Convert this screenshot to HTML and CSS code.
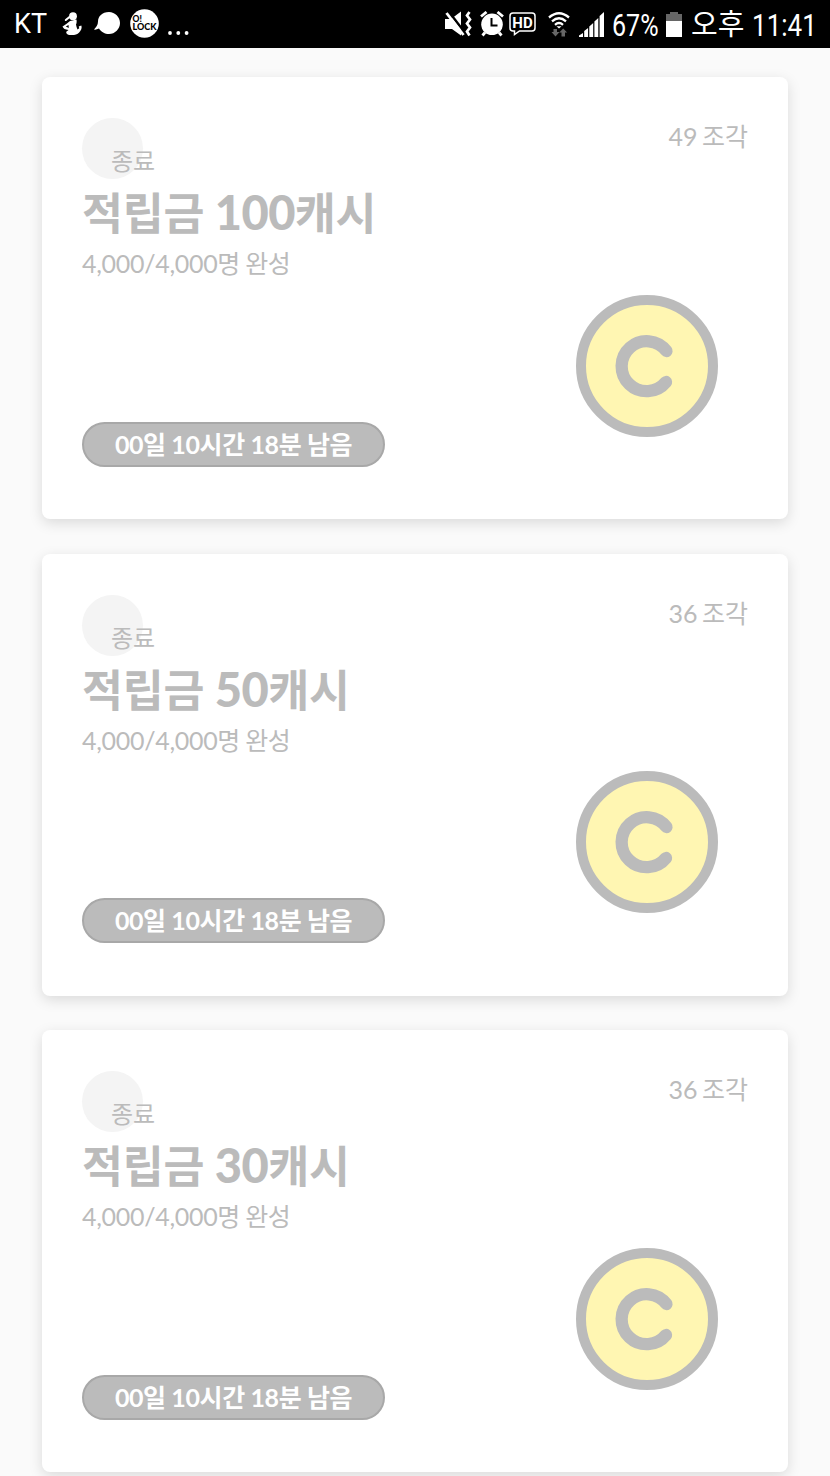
FILE: index.html
```
<!DOCTYPE html>
<html lang="ko">
<head>
<meta charset="UTF-8" />
<meta name="viewport" content="width=device-width,initial-scale=1" />
<title>적립금 조각</title>
<link rel="stylesheet" href="styles.css">
</head>
<body>

<!-- STATUS BAR -->
<header class="status">
  <div class="status-left">
    <span class="carrier">KT</span>
    <svg class="ic-person" width="20" height="24" viewBox="0 0 20 24">
      <circle cx="11" cy="4.200" r="3.900" fill="#fff"/>
      <path d="M7.500 5L3.800 8" stroke="#fff" stroke-width="2" stroke-linecap="round"/>
      <path d="M8 9l6.500-1.500q.5 3-.5 5 .5 3 1.500 5l1.800-1.300-.6-1.700 2.600-1q1 3-1 5.500-2 3.500-6.300 4H7q-3.300-.5-2.700-3.200L6.500 18Q1.500 17.500.500 14.500 4 12.500 8 9z" fill="#fff"/>
      <path d="M3.800 14.600l2.700-1.600.3 3z" fill="#000"/>
    </svg>
    <svg class="ic-talk" width="26" height="22" viewBox="0 0 26 22">
      <path d="M15 0C8 0 4 4.500 4 9.500 4 13 2 15 0 17.500q2 .5 5-1C7 20 11 22 15 22c6 0 11-5 11-11S21 0 15 0z" fill="#fff"/>
    </svg>
    <svg class="ic-lock" width="29" height="29" viewBox="0 0 29 29">
      <circle cx="14.500" cy="14.500" r="14.300" fill="#fff"/>
      <text class="lock-text" x="2.500" y="13">O!</text>
      <text class="lock-text" x="2.500" y="21.300" textLength="24" lengthAdjust="spacingAndGlyphs">LOCK</text>
    </svg>
    <svg class="ic-dots" width="21" height="4" viewBox="0 0 21 4">
      <g fill="#fff"><circle cx="2" cy="2" r="1.900"/><circle cx="10.300" cy="2" r="1.900"/><circle cx="18.600" cy="2" r="1.900"/></g>
    </svg>
  </div>
  <div class="status-right">
    <svg class="ic-mute" width="27" height="26" viewBox="0 0 27 26">
      <path d="M0 8h6L16 .500v24L7 18H0z" fill="#fff"/>
      <path d="M4 1L20.500 22.500" stroke="#000" stroke-width="2.600"/>
      <path d="M1.500 2L18.500 24" stroke="#fff" stroke-width="2.800"/>
      <path d="M24.500 1l-2.500 3.500 3 4-3 4 3 4-3 4 2.500 4" fill="none" stroke="#fff" stroke-width="2.700"/>
    </svg>
    <svg class="ic-alarm" width="24" height="26" viewBox="0 0 24 26">
      <path d="M1 5.500l5.500-4.500M23 5.500l-5.500-4.500M5 21.500l-2.500 3M19 21.500l2.500 3" stroke="#fff" stroke-width="2.800"/>
      <circle cx="12" cy="13.300" r="10.800" fill="#fff"/>
      <path d="M11.500 7v7.500h6" fill="none" stroke="#000" stroke-width="2"/>
    </svg>
    <svg class="ic-hd" width="27" height="24" viewBox="0 0 27 24">
      <path d="M4 1h19q3 0 3 3v12q0 3-3 3H10.500L5.500 22.500V19H4q-3 0-3-3V4q0-3 3-3z" fill="none" stroke="#fff" stroke-width="1.500"/>
      <text class="hd-text" x="3.300" y="15.500" textLength="20.500">HD</text>
    </svg>
    <svg class="ic-wifi" width="22" height="25" viewBox="0 0 22 25">
      <g fill="none" stroke="#fff" stroke-width="2.300">
        <path d="M1 5.500Q11-3 21 5.500"/><path d="M4 9.300q7-6 14 0"/><path d="M7 12.800q4-3.500 8 0"/>
      </g>
      <path d="M8.500 14.300h5L11 16.500z" fill="#fff"/>
      <path d="M5.500 17v3H3.500l4 4.500 4-4.500H9v-3zM13.500 24.500v-4H11.300l3.900-4 3.900 4H17v4z" fill="#666"/>
    </svg>
    <svg class="ic-signal" width="25" height="25" viewBox="0 0 25 25">
      <path d="M0 25v-1.500L4 21v4zM5.200 25v-6l3.900-3v9zM10.300 25V14.500L14.200 11v14zM15.400 25V9.500L19.300 6v19zM20.600 25V4L25 0v25z" fill="#fff"/>
    </svg>
    <span class="battery-text">67%</span>
    <svg class="ic-battery" width="16" height="25" viewBox="0 0 16 25">
      <path d="M0 2h4V0h8v2h4v7H0z" fill="#666"/>
      <path d="M0 9h16v16H0z" fill="#fff"/>
    </svg>
    <span class="ampm">오후</span>
    <span class="clock">11:41</span>
  </div>
</header>

<!-- REWARD LIST -->
<main class="list">

  <section class="card">
    <div class="card-head">
      <div class="badge"><span>종료</span></div>
      <div class="pieces">49 조각</div>
    </div>
    <h2>적립금 <b>100</b>캐시</h2>
    <p class="count">4,000/4,000명 완성</p>
    <div class="card-foot">
      <div class="remain"><span>00일 10시간 18분 남음</span></div>
      <svg class="coin" viewBox="0 0 142 142">
        <circle cx="71" cy="71" r="66" fill="#fff6b2" stroke="#bbb" stroke-width="10"/>
        <path d="M90.500 56A25 25 0 1 0 90 87" fill="none" stroke="#bbb" stroke-width="12.300" stroke-linecap="round"/>
      </svg>
    </div>
  </section>

  <section class="card">
    <div class="card-head">
      <div class="badge"><span>종료</span></div>
      <div class="pieces">36 조각</div>
    </div>
    <h2>적립금 <b>50</b>캐시</h2>
    <p class="count">4,000/4,000명 완성</p>
    <div class="card-foot">
      <div class="remain"><span>00일 10시간 18분 남음</span></div>
      <svg class="coin" viewBox="0 0 142 142">
        <circle cx="71" cy="71" r="66" fill="#fff6b2" stroke="#bbb" stroke-width="10"/>
        <path d="M90.500 56A25 25 0 1 0 90 87" fill="none" stroke="#bbb" stroke-width="12.300" stroke-linecap="round"/>
      </svg>
    </div>
  </section>

  <section class="card">
    <div class="card-head">
      <div class="badge"><span>종료</span></div>
      <div class="pieces">36 조각</div>
    </div>
    <h2>적립금 <b>30</b>캐시</h2>
    <p class="count">4,000/4,000명 완성</p>
    <div class="card-foot">
      <div class="remain"><span>00일 10시간 18분 남음</span></div>
      <svg class="coin" viewBox="0 0 142 142">
        <circle cx="71" cy="71" r="66" fill="#fff6b2" stroke="#bbb" stroke-width="10"/>
        <path d="M90.500 56A25 25 0 1 0 90 87" fill="none" stroke="#bbb" stroke-width="12.300" stroke-linecap="round"/>
      </svg>
    </div>
  </section>

</main>

</body>
</html>
```
FILE: styles.css
```
:root{
  --gray:#bbb; --bg:#fafafa;
}
*{box-sizing:border-box;
    margin:0;
    padding:0}

body{
  background:var(--bg);
  color:var(--gray);
  font-family:Lato,"Noto Sans CJK KR",sans-serif;
  height:1476px;
  overflow:hidden;
}

/* status bar */
.status{
  height:48px;
  background:#000;
  color:#fff;
  display:flex;
  justify-content:space-between;
  padding:0 14px 0 14px;
  font-family:Roboto,"Noto Sans CJK KR",sans-serif;
  line-height:48px;
  white-space:nowrap;
}
.status-left,.status-right{display:flex;align-items:center}
.status svg{flex:none}
.carrier{font-size:27px;width:48px}
.ic-person{margin-top:-1px}
.ic-talk{margin-left:12px;margin-top:-3px}
.ic-lock{margin-left:10px;margin-top:-1px}
.ic-dots{margin-left:9px;margin-top:18px}
.lock-text{font:900 8.500px Lato,sans-serif}
.hd-text{font:700 15px Roboto,sans-serif;fill:#fff}
.ic-alarm{margin-left:8px}
.ic-hd{margin-left:5px}
.ic-wifi{margin-left:12px}
.ic-signal{margin-left:9px}
.battery-text{
  font-size:31px;
  width:48px;
  margin-left:8px;
  padding-top:3px;
  transform:scaleX(.81);
  transform-origin:left;
}
.ic-battery{margin-left:6px}
.ampm{font-size:29px;margin-left:9px;padding-top:2px;width:53px}
.clock{
  font-size:31px;
  width:64px;
  margin-left:8px;
  padding-top:3px;
  transform:scaleX(.84);
  transform-origin:left;
}

/* cards */
.list{
  display:flex;
  flex-direction:column;
  gap:34.500px;
  padding:29px 42px 0;
}
.card{
  flex:none;
  height:442px;
  padding:41px 40px 0;
  background:#fff;
  border-radius:8px;
  box-shadow:0 4px 14px rgba(0,0,0,.13);
}
.card-head{
  display:flex;
  justify-content:space-between;
  height:61px;
}
.badge{
  width:61px;
  height:61px;
  border-radius:50%;
  background:#f4f4f4;
  padding:25px 0 0 29px;
  font-size:24px;
  line-height:36px;
  white-space:nowrap;
}
.pieces{
  font-size:25px;
  line-height:36px;
  word-spacing:-2px;
}
h2{
  margin-top:4px;
  font-size:44.500px;
  line-height:60px;
  font-weight:700;
  letter-spacing:-.2px;
}
h2 b{
  font-size:47px;
  line-height:1;
  letter-spacing:-.6px;
}
.count{
  margin-top:2px;
  font-size:25px;
  line-height:36px;
  letter-spacing:-.3px;
  word-spacing:-1px;
}
.card-foot{
  display:flex;
  justify-content:space-between;
  margin-top:13.500px;
  height:172px;
}
.remain{
  align-self:flex-end;
  width:303px;
  height:45px;
  border:2px solid #a8a8a8;
  border-radius:23px;
  background:var(--gray);
  color:#fff;
  font-size:25px;
  font-weight:700;
  line-height:41px;
  letter-spacing:-.4px;
  text-align:center;
  white-space:nowrap;
}
.coin{
  width:142px;
  height:142px;
  margin-right:30px;
}
```
